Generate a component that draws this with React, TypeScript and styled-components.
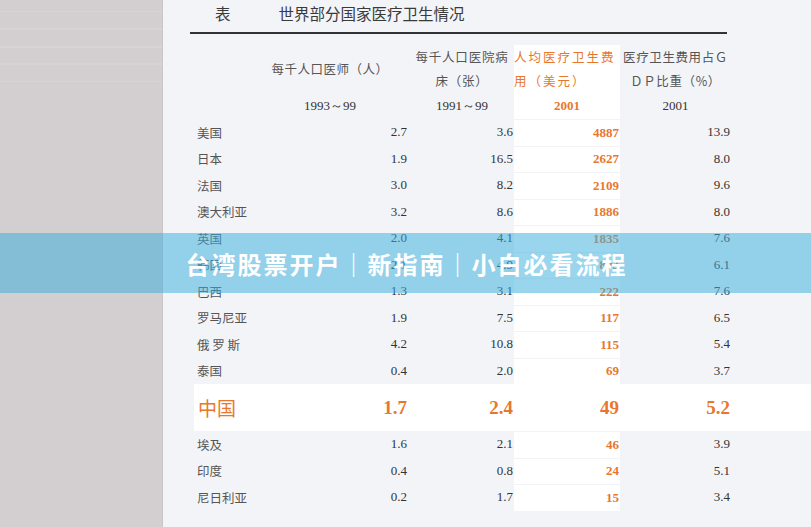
import React from "react";
import styled, { createGlobalStyle } from "styled-components";

const Global = createGlobalStyle`
  html, body { margin: 0; padding: 0; }
  body {
    width: 811px; height: 527px; overflow: hidden;
    background: #f3f4f8;
    font-family: "Liberation Serif", "Noto Sans CJK SC", serif;
  }
`;

const COLS = "56px 160px 104px 106px 111px";
const ORANGE = "#e8772e";

const Shell = styled.div`
  position: relative;
  display: flex;
  width: 811px;
  height: 527px;
  overflow: hidden;
`;

const Sidebar = styled.div`
  width: 162px;
  flex-shrink: 0;
  background:
    linear-gradient(#d3cfd0, #d3cfd0) 0 92px / 100% 100% no-repeat,
    repeating-linear-gradient(
      to bottom,
      #d3cfd0 0px, #d3cfd0 11px, #d8d4d5 11px, #d8d4d5 12.5px, #d3cfd0 12.5px, #d3cfd0 17.5px
    );
  border-right: 1px solid #cbc7c8;
`;

const Main = styled.div`
  flex: 1;
  padding: 4px 0 0 27px;
`;

const TitleRow = styled.div`
  display: flex;
  align-items: center;
  height: 18px;
  padding-left: 25px;
  gap: 48px;
  font-family: "Noto Sans CJK SC", sans-serif;
  font-size: 15.5px;
  color: #3a3a3a;
`;

const Rule = styled.div`
  width: 537px;
  height: 2px;
  margin-top: 10px;
  background: #333;
`;

const Table = styled.div`
  margin-top: 11px;
  margin-left: 4px;
  display: flex;
  flex-direction: column;
`;

const Row = styled.div<{ $h: number; $bg?: boolean }>`
  display: grid;
  grid-template-columns: ${COLS};
  height: ${(p) => p.$h}px;
  background: ${(p) => (p.$bg ? "#ffffff" : "transparent")};
`;

const HeadCell = styled.div<{ $hl?: boolean; $ls?: number; $align?: string }>`
  display: flex;
  align-items: center;
  justify-content: ${(p) => p.$align || "center"};
  text-align: ${(p) => (p.$align === "flex-start" ? "left" : "center")};
  font-family: "Noto Sans CJK SC", sans-serif;
  font-size: 12.5px;
  line-height: 24px;
  letter-spacing: ${(p) => p.$ls ?? 0}px;
  color: ${(p) => (p.$hl ? ORANGE : "#555")};
  background: ${(p) => (p.$hl ? "#ffffff" : "transparent")};
  white-space: nowrap;
`;

const YearCell = styled.div<{ $hl?: boolean }>`
  display: flex;
  align-items: center;
  justify-content: center;
  font-family: "Liberation Serif", serif;
  font-size: 13px;
  font-weight: ${(p) => (p.$hl ? 700 : 400)};
  color: ${(p) => (p.$hl ? ORANGE : "#333")};
  background: ${(p) => (p.$hl ? "#ffffff" : "transparent")};
`;

const Name = styled.div<{ $big?: boolean }>`
  display: flex;
  align-items: center;
  padding-left: ${(p) => (p.$big ? 4 : 3)}px;
  font-family: "Noto Sans CJK SC", sans-serif;
  font-size: ${(p) => (p.$big ? 19 : 12.5)}px;
  color: ${(p) => (p.$big ? ORANGE : "#555")};
  white-space: pre;
`;

const Num = styled.div<{ $hl?: boolean; $big?: boolean; $pr?: number }>`
  display: flex;
  align-items: center;
  justify-content: flex-end;
  padding-right: ${(p) => p.$pr ?? 1}px;
  font-family: "Liberation Serif", serif;
  font-size: ${(p) => (p.$big ? 19 : 13)}px;
  font-weight: ${(p) => (p.$hl || p.$big ? 700 : 400)};
  color: ${(p) => (p.$big || p.$hl ? ORANGE : "#333")};
  background: ${(p) => (p.$hl ? "#ffffff" : "transparent")};
  border-top: ${(p) => (p.$hl && !p.$big ? "1px solid #f3f3f5" : "none")};
  box-sizing: border-box;
`;

const Banner = styled.div`
  position: absolute;
  left: 0;
  right: 0;
  top: 233px;
  height: 60px;
  background: rgba(60, 175, 220, 0.52);
  display: flex;
  align-items: center;
  justify-content: center;
  padding-left: 2px;
  font-family: "Noto Sans CJK SC", sans-serif;
  font-weight: 700;
  font-size: 24px;
  letter-spacing: 2px;
  color: #ffffff;
`;

const rows: string[][] = [
  ["美国", "2.7", "3.6", "4887", "13.9"],
  ["日本", "1.9", "16.5", "2627", "8.0"],
  ["法国", "3.0", "8.2", "2109", "9.6"],
  ["澳大利亚", "3.2", "8.6", "1886", "8.0"],
  ["英国", "2.0", "4.1", "1835", "7.6"],
  ["韩国", "2.1", "4.9", "893", "6.1"],
  ["巴西", "1.3", "3.1", "222", "7.6"],
  ["罗马尼亚", "1.9", "7.5", "117", "6.5"],
  ["俄 罗 斯", "4.2", "10.8", "115", "5.4"],
  ["泰国", "0.4", "2.0", "69", "3.7"],
];

const rowsAfter: string[][] = [
  ["埃及", "1.6", "2.1", "46", "3.9"],
  ["印度", "0.4", "0.8", "24", "5.1"],
  ["尼日利亚", "0.2", "1.7", "15", "3.4"],
];

function DataRow({ r }: { r: string[] }) {
  return (
    <Row $h={26.5}>
      <Name>{r[0]}</Name>
      <Num $pr={3}>{r[1]}</Num>
      <Num>{r[2]}</Num>
      <Num $hl>{r[3]}</Num>
      <Num>{r[4]}</Num>
    </Row>
  );
}

export default function App() {
  return (
    <>
      <Global />
      <Shell>
        <Sidebar />
        <Main>
          <TitleRow>
            <span>表</span>
            <span>世界部分国家医疗卫生情况</span>
          </TitleRow>
          <Rule />
          <Table>
            <Row $h={48}>
              <HeadCell />
              <HeadCell $ls={0.5}>每千人口医师（人）</HeadCell>
              <HeadCell $ls={0.8}>
                每千人口医院病
                <br />
                床（张）
              </HeadCell>
              <HeadCell $hl $ls={2} $align="flex-start">
                人均医疗卫生费
                <br />
                用（美元）
              </HeadCell>
              <HeadCell $ls={0.6}>
                医疗卫生费用占Ｇ
                <br />
                ＤＰ比重（%）
              </HeadCell>
            </Row>
            <Row $h={26}>
              <YearCell />
              <YearCell>1993～99</YearCell>
              <YearCell>1991～99</YearCell>
              <YearCell $hl>2001</YearCell>
              <YearCell>2001</YearCell>
            </Row>
            {rows.map((r) => (
              <DataRow key={r[0]} r={r} />
            ))}
            <Row $h={47} $bg>
              <Name $big>中国</Name>
              <Num $big $pr={3}>1.7</Num>
              <Num $big>2.4</Num>
              <Num $big $hl>49</Num>
              <Num $big>5.2</Num>
            </Row>
            {rowsAfter.map((r) => (
              <DataRow key={r[0]} r={r} />
            ))}
          </Table>
        </Main>
        <Banner>台湾股票开户｜新指南｜小白必看流程</Banner>
      </Shell>
    </>
  );
}
